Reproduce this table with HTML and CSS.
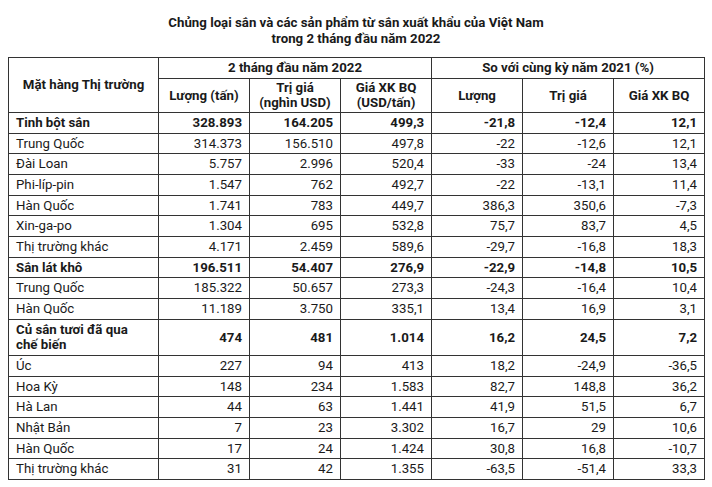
FILE: index.html
```html
<!DOCTYPE html>
<html lang="vi">
<head>
<meta charset="utf-8">
<title>Chủng loại sắn</title>
<link rel="stylesheet" href="styles.css">
</head>
<body>
<div class="page">
  <h1 class="title">Chủng loại sắn và các sản phẩm từ sắn xuất khẩu của Việt Nam<br>trong 2 tháng đầu năm 2022</h1>
  <table class="data">
    <colgroup>
      <col class="c-name"><col class="c-num"><col class="c-num"><col class="c-num"><col class="c-num"><col class="c-num"><col class="c-num">
    </colgroup>
    <thead>
      <tr class="h1">
        <th rowspan="2">Mặt hàng Thị trường</th>
        <th colspan="3">2 tháng đầu năm 2022</th>
        <th colspan="3">So với cùng kỳ năm 2021 (%)</th>
      </tr>
      <tr class="h2">
        <th>Lượng (tấn)</th>
        <th>Trị giá<br>(nghìn USD)</th>
        <th>Giá XK BQ<br>(USD/tấn)</th>
        <th>Lượng</th>
        <th>Trị giá</th>
        <th>Giá XK BQ</th>
      </tr>
    </thead>
    <tbody>
      <tr class="group"><td>Tinh bột sắn</td><td>328.893</td><td>164.205</td><td>499,3</td><td>-21,8</td><td>-12,4</td><td>12,1</td></tr>
      <tr><td>Trung Quốc</td><td>314.373</td><td>156.510</td><td>497,8</td><td>-22</td><td>-12,6</td><td>12,1</td></tr>
      <tr><td>Đài Loan</td><td>5.757</td><td>2.996</td><td>520,4</td><td>-33</td><td>-24</td><td>13,4</td></tr>
      <tr><td>Phi-líp-pin</td><td>1.547</td><td>762</td><td>492,7</td><td>-22</td><td>-13,1</td><td>11,4</td></tr>
      <tr><td>Hàn Quốc</td><td>1.741</td><td>783</td><td>449,7</td><td>386,3</td><td>350,6</td><td>-7,3</td></tr>
      <tr><td>Xin-ga-po</td><td>1.304</td><td>695</td><td>532,8</td><td>75,7</td><td>83,7</td><td>4,5</td></tr>
      <tr><td>Thị trường khác</td><td>4.171</td><td>2.459</td><td>589,6</td><td>-29,7</td><td>-16,8</td><td>18,3</td></tr>
      <tr class="group"><td>Sắn lát khô</td><td>196.511</td><td>54.407</td><td>276,9</td><td>-22,9</td><td>-14,8</td><td>10,5</td></tr>
      <tr><td>Trung Quốc</td><td>185.322</td><td>50.657</td><td>273,3</td><td>-24,3</td><td>-16,4</td><td>10,4</td></tr>
      <tr><td>Hàn Quốc</td><td>11.189</td><td>3.750</td><td>335,1</td><td>13,4</td><td>16,9</td><td>3,1</td></tr>
      <tr class="group"><td>Củ sắn tươi đã qua<br>chế biến</td><td>474</td><td>481</td><td>1.014</td><td>16,2</td><td>24,5</td><td>7,2</td></tr>
      <tr><td>Úc</td><td>227</td><td>94</td><td>413</td><td>18,2</td><td>-24,9</td><td>-36,5</td></tr>
      <tr><td>Hoa Kỳ</td><td>148</td><td>234</td><td>1.583</td><td>82,7</td><td>148,8</td><td>36,2</td></tr>
      <tr><td>Hà Lan</td><td>44</td><td>63</td><td>1.441</td><td>41,9</td><td>51,5</td><td>6,7</td></tr>
      <tr><td>Nhật Bản</td><td>7</td><td>23</td><td>3.302</td><td>16,7</td><td>29</td><td>10,6</td></tr>
      <tr><td>Hàn Quốc</td><td>17</td><td>24</td><td>1.424</td><td>30,8</td><td>16,8</td><td>-10,7</td></tr>
      <tr><td>Thị trường khác</td><td>31</td><td>42</td><td>1.355</td><td>-63,5</td><td>-51,4</td><td>33,3</td></tr>
    </tbody>
  </table>
</div>
</body>
</html>
```
FILE: styles.css
```css
html, body {
  margin: 0;
  padding: 0;
  background: #ffffff;
}
body {
  font-family: Roboto, "Liberation Sans", Arial, sans-serif;
  font-size: 13.25px;
  color: #1a1a1a;
}
.page {
  padding: 15px 8px 0 8px;
}
.title {
  margin: 0 0 10px 0;
  font-size: 13.25px;
  font-weight: bold;
  line-height: 16px;
  text-align: center;
  color: #1a1a1a;
}
.data {
  border-collapse: collapse;
  table-layout: fixed;
  width: 696px;
}
.c-name { width: 150px; }
.c-num { width: 91px; }
.data th,
.data td {
  border: 1px solid #333333;
  line-height: 15.67px;
  padding: 2px 7px 2px 7px;
}
.data th {
  font-weight: bold;
  text-align: center;
  vertical-align: middle;
}
.data .h1 th {
  padding-top: 2px;
  padding-bottom: 2px;
}
.data .h2 th {
  padding-top: 1px;
  padding-bottom: 1px;
}
.data td {
  text-align: right;
  vertical-align: middle;
  white-space: nowrap;
}
.data td:first-child {
  text-align: left;
}
.data .group td {
  font-weight: bold;
}
```
